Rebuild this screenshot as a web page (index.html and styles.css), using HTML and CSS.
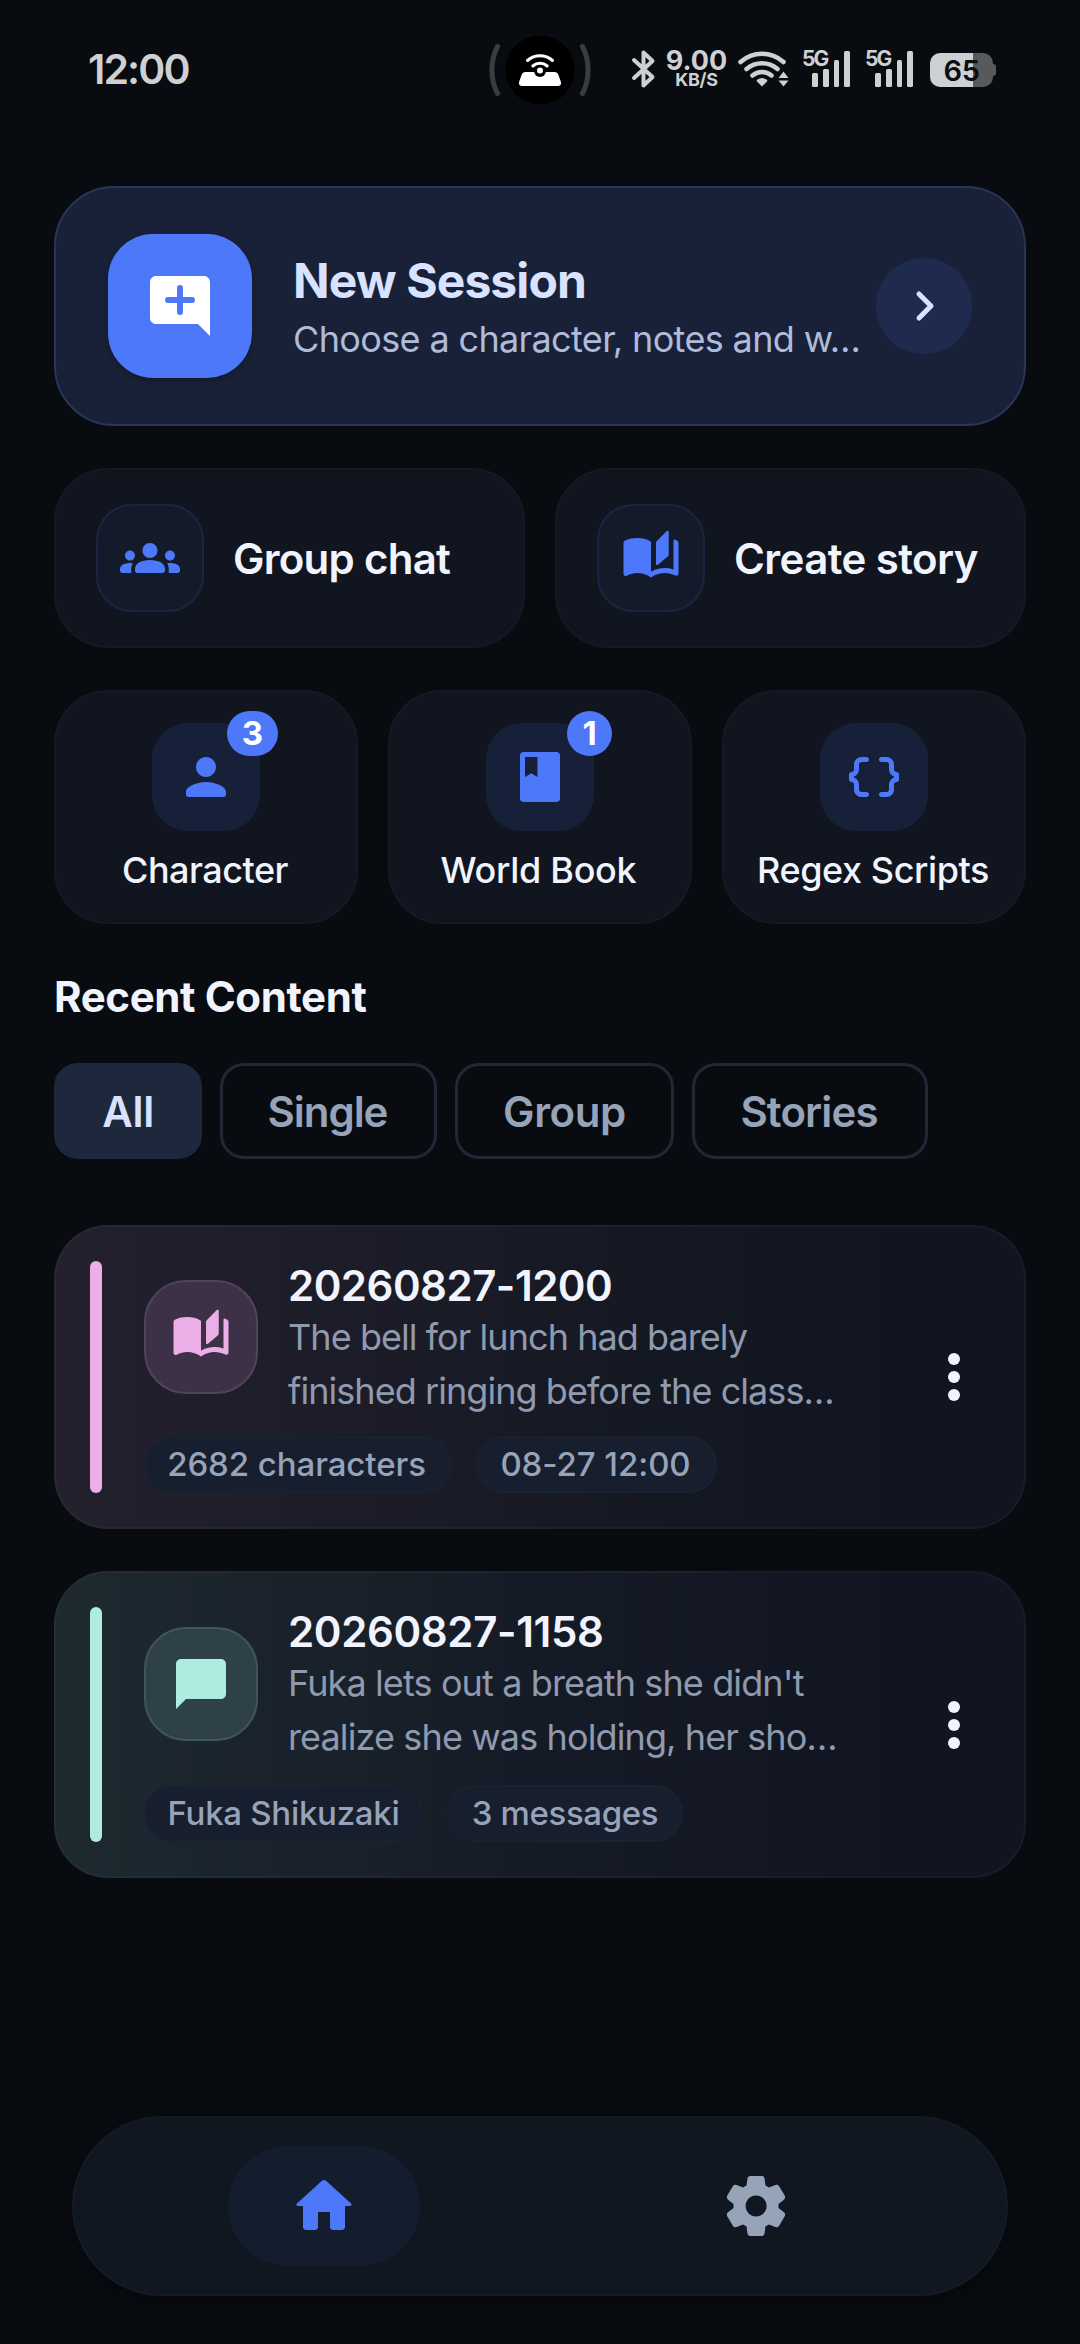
FILE: index.html
```html
<!DOCTYPE html>
<html lang="en">
<head>
<meta charset="utf-8">
<title>Home</title>
<link rel="stylesheet" href="styles.css">
</head>
<body>
<svg class="defs" aria-hidden="true">
  <symbol id="stories" viewBox="0 0 24 24">
    <path d="M12 19.8c-1.6-1.2-3.5-1.8-5.5-1.8-1.45 0-2.85.35-4.2 1.05-.6.3-1.3-.1-1.3-.8V6c0-.4.2-.75.5-.95C3 4.3 4.75 4 6.5 4c2 0 3.9.4 5.5 1.5v12c1.6-1 3.5-1.5 5.5-1.5 1.2 0 2.35.2 3.5.55V5.2c0-.5.3-.7.7-.55.3.12.55.25.8.4.3.2.5.5.5.95v12.2c0 .7-.7 1.1-1.3.8-1.35-.7-2.75-1.05-4.2-1.05-2 0-3.9.6-5.5 1.85z"/>
    <path d="M14 6c0-.25.1-.5.3-.7l4-4.1c.3-.3.8-.1.8.35v9.05c0 .3-.1.5-.3.7l-4 3.4c-.3.25-.8.05-.8-.35z"/>
  </symbol>
</svg>

<header class="status">
  <div class="time">12:00</div>
  <svg class="cutout" viewBox="0 0 110 70" fill="none" stroke-linecap="round">
    <circle cx="55" cy="35" r="34.500" fill="#000"/>
    <path d="M12.500 11.500a52 52 0 0 0 0 47M97.500 11.500a52 52 0 0 1 0 47" stroke="#3b3c3e" stroke-width="5"/>
    <path d="M40 37h30q2.500 0 3.300 2.500l2.500 7q1.200 4.500-3.300 4.500H37.500q-4.500 0-3.300-4.500l2.500-7q.8-2.500 3.300-2.500z" fill="#fff"/>
    <circle cx="55" cy="36" r="6" fill="#000"/>
    <circle cx="55" cy="35.500" r="3" fill="#fff"/>
    <path d="M42.500 25.500a19 19 0 0 1 25 0M47.800 31a11 11 0 0 1 14.400 0" stroke="#fff" stroke-width="3"/>
  </svg>
  <div class="indicators">
    <svg class="bt" viewBox="0 0 26 40" fill="none" stroke="#cfd0d2" stroke-width="4" stroke-linejoin="round" stroke-linecap="round"><path d="M4 11l18.500 17-9 8.500v-33l9 8.500L4 29"/></svg>
    <div class="speed"><span class="rate">9.00</span><span class="unit">KB/S</span></div>
    <svg class="wifi" viewBox="0 0 54 38" fill="none" stroke="#cfd0d2" stroke-width="4.500" stroke-linecap="round"><path d="M4.500 12a32 32 0 0 1 43 0M10.500 19a24 24 0 0 1 31 0M16.500 25.500a15 15 0 0 1 19 0"/><path d="M26 36.500l-5-5q-.8-1.200.5-2a8 8 0 0 1 9 0q1.300.8.5 2zM47.500 21.500l5 6.500h-10zM42.500 30.500h10l-5 6z" fill="#cfd0d2" stroke="none"/></svg>
    <div class="sig first"><span>5G</span><i class="s1"></i><i class="s2"></i><i class="s3"></i><i class="s4"></i></div>
    <div class="sig"><span>5G</span><i class="s1"></i><i class="s2"></i><i class="s3"></i><i class="s4"></i></div>
    <div class="battery">65</div>
  </div>
</header>

<main>
  <section class="hero">
    <div class="hero-icon"><svg viewBox="0 0 24 24" width="72" height="72"><path fill="#fff" d="M22 4c0-1.100-.9-2-2-2H4c-1.100 0-2 .9-2 2v12c0 1.100.9 2 2 2h14l4 4V4z"/><path d="M12 6v8M8 10h8" stroke="#4d78f9" stroke-width="2" stroke-linecap="round"/></svg></div>
    <div class="hero-text">
      <h1>New Session</h1>
      <p>Choose a character, notes and w…</p>
    </div>
    <div class="go"><svg viewBox="0 0 24 24" width="60" height="60"><path d="M10 7.200l4.800 4.800-4.800 4.800" fill="none" stroke="#d9e2ff" stroke-width="2" stroke-linecap="round" stroke-linejoin="round"/></svg></div>
  </section>

  <section class="row two">
    <div class="card wide"><div class="tile outlined"><svg viewBox="0 0 24 24"><path d="M12 12.750c1.630 0 3.070.39 4.240.9 1.080.48 1.760 1.560 1.760 2.730V17c0 .55-.45 1-1 1H7c-.55 0-1-.45-1-1v-.61c0-1.180.68-2.260 1.760-2.730 1.170-.52 2.610-.91 4.240-.91zM4 13c1.100 0 2-.9 2-2s-.9-2-2-2-2 .9-2 2 .9 2 2 2zm1.130 1.100c-.37-.06-.74-.1-1.130-.1-.99 0-1.930.21-2.780.58C.48 14.900 0 15.620 0 16.430V17c0 .55.45 1 1 1h3.500v-1.610c0-.83.23-1.610.63-2.290zM20 13c1.100 0 2-.9 2-2s-.9-2-2-2-2 .9-2 2 .9 2 2 2zm4 3.430c0-.81-.48-1.530-1.220-1.850-.85-.37-1.790-.58-2.780-.58-.39 0-.76.04-1.130.1.4.68.63 1.460.63 2.290V18H23c.55 0 1-.45 1-1v-.57zM12 6c1.660 0 3 1.340 3 3s-1.340 3-3 3-3-1.340-3-3 1.340-3 3-3z"/></svg></div><h2>Group chat</h2></div>
    <div class="card wide"><div class="tile outlined"><svg><use href="#stories"/></svg></div><h2 class="story">Create story</h2></div>
  </section>

  <section class="row three">
    <div class="card small"><div class="tile"><svg viewBox="0 0 24 24"><path d="M12 12c2.210 0 4-1.790 4-4s-1.790-4-4-4-4 1.790-4 4 1.790 4 4 4zm0 2c-2.670 0-8 1.340-8 4v1c0 .55.45 1 1 1h14c.55 0 1-.45 1-1v-1c0-2.660-5.330-4-8-4z"/></svg><span class="badge b3">3</span></div><h3>Character</h3></div>
    <div class="card small"><div class="tile"><svg viewBox="0 0 24 24"><path d="M18.600 2H5.400C4.600 2 4 2.600 4 3.400v17.200c0 .8.6 1.400 1.400 1.400h13.200c.8 0 1.400-.6 1.400-1.400V3.400c0-.8-.6-1.400-1.400-1.400zM6 4h5v8l-2.500-1.500L6 12V4z"/></svg><span class="badge">1</span></div><h3 class="world">World Book</h3></div>
    <div class="card small"><div class="tile"><svg viewBox="0 0 24 24"><path d="M4 7v2c0 .55-.45 1-1 1s-1 .45-1 1v2c0 .55.45 1 1 1s1 .45 1 1v2c0 1.650 1.350 3 3 3h2c.55 0 1-.45 1-1s-.45-1-1-1H7c-.55 0-1-.45-1-1v-2c0-1.300-.84-2.420-2-2.830v-.34C5.160 11.420 6 10.300 6 9V7c0-.55.45-1 1-1h2c.55 0 1-.45 1-1s-.45-1-1-1H7C5.350 4 4 5.350 4 7zM20 7v2c0 .55.45 1 1 1s1 .45 1 1v2c0 .55-.45 1-1 1s-1 .45-1 1v2c0 1.650-1.350 3-3 3h-2c-.55 0-1-.45-1-1s.45-1 1-1h2c.55 0 1-.45 1-1v-2c0-1.300.84-2.420 2-2.830v-.34c-1.160-.41-2-1.530-2-2.830V7c0-.55-.45-1-1-1h-2c-.55 0-1-.45-1-1s.45-1 1-1h2c1.650 0 3 1.350 3 3z"/></svg></div><h3 class="regex">Regex Scripts</h3></div>
  </section>

  <h2 class="section-title">Recent Content</h2>
  <nav class="chips">
    <div class="chip active c1">All</div>
    <div class="chip c2">Single</div>
    <div class="chip c3">Group</div>
    <div class="chip c4">Stories</div>
  </nav>

  <article class="item pink">
    <div class="bar"></div>
    <div class="body">
      <div class="head">
        <div class="avatar"><svg><use href="#stories"/></svg></div>
        <div class="text"><h4>20260827-1200</h4><p>The bell for lunch had barely<br>finished ringing before the class…</p></div>
      </div>
      <div class="tags"><div class="tag t1">2682 characters</div><div class="tag t2">08-27 12:00</div></div>
    </div>
    <div class="menu"><i></i><i></i><i></i></div>
  </article>

  <article class="item mint">
    <div class="bar"></div>
    <div class="body">
      <div class="head">
        <div class="avatar"><svg viewBox="0 0 24 24"><path d="M20 2H4c-1.100 0-2 .9-2 2v18l4-4h14c1.100 0 2-.9 2-2V4c0-1.100-.9-2-2-2z"/></svg></div>
        <div class="text"><h4>20260827-1158</h4><p>Fuka lets out a breath she didn't<br>realize she was holding, her sho…</p></div>
      </div>
      <div class="tags"><div class="tag t3">Fuka Shikuzaki</div><div class="tag t4">3 messages</div></div>
    </div>
    <div class="menu"><i></i><i></i><i></i></div>
  </article>
</main>

<footer class="dock">
  <div class="tab"><div class="pill"><svg viewBox="0 0 24 24" width="72" height="72" fill="#4d78f9"><path d="M10 19v-5h4v5c0 .55.45 1 1 1h3c.55 0 1-.45 1-1v-7h1.700c.46 0 .68-.57.33-.87L12.670 3.600c-.38-.34-.96-.34-1.340 0l-8.360 7.530c-.34.3-.13.87.33.87H5v7c0 .55.45 1 1 1h3c.55 0 1-.45 1-1z"/></svg></div></div>
  <div class="tab"><svg viewBox="0 0 24 24" width="72" height="72" fill="#96a3b9"><path d="M19.500 12c0-.23-.01-.45-.03-.68l1.860-1.410c.4-.3.51-.86.26-1.300l-1.870-3.230c-.25-.44-.79-.62-1.250-.42l-2.150.91c-.37-.26-.76-.49-1.170-.68l-.29-2.310C14.800 2.380 14.370 2 13.870 2h-3.730c-.51 0-.94.38-1 .88l-.29 2.310c-.41.19-.8.42-1.170.68l-2.150-.91c-.46-.2-1-.02-1.250.42L2.410 8.620c-.25.44-.14.99.26 1.300l1.860 1.410C4.510 11.550 4.500 11.770 4.500 12s.01.45.03.68l-1.860 1.410c-.4.3-.51.86-.26 1.300l1.870 3.230c.25.44.79.62 1.250.42l2.150-.91c.37.26.76.49 1.170.68l.29 2.310c.06.5.49.88.99.88h3.730c.5 0 .93-.38.99-.88l.29-2.310c.41-.19.8-.42 1.170-.68l2.150.91c.46.2 1 .02 1.250-.42l1.870-3.230c.25-.44.14-.99-.26-1.300l-1.860-1.410c.03-.23.04-.45.04-.68zm-7.460 3.500c-1.930 0-3.500-1.570-3.500-3.500s1.570-3.500 3.500-3.500 3.500 1.570 3.500 3.500-1.570 3.500-3.500 3.500z"/></svg></div>
</footer>
</body>
</html>
```
FILE: styles.css
```css
* { box-sizing: border-box; }
body {
  margin: 0;
  width: 1080px;
  height: 2344px;
  overflow: hidden;
  background: #080b10;
  color: #f1f4fd;
  font-family: Inter, "Noto Sans", sans-serif;
  display: flex;
  flex-direction: column;
}
h1, h2, h3, h4, p { margin: 0; white-space: nowrap; }
svg { display: block; flex: none; }
.defs { position: absolute; width: 0; height: 0; }

/* status bar */
.status { height: 140px; display: flex; align-items: center; color: #cfd0d2; flex: none; }
.time { width: 485px; padding-left: 88px; font-size: 41px; line-height: 50px; font-weight: 600; letter-spacing: -1.9px; margin-top: -3px; }
.cutout { width: 110px; height: 70px; }
.indicators { display: flex; align-items: center; margin-left: 35px; height: 40px; margin-top: -2px; }
.bt { width: 26px; height: 40px; }
.speed { width: 63px; margin-left: 9px; height: 38px; display: flex; flex-direction: column; align-items: center; }
.rate { font-size: 27px; line-height: 22px; font-weight: 700; }
.unit { font-size: 18px; line-height: 16px; font-weight: 700; letter-spacing: -.28px; }
.wifi { width: 54px; height: 38px; margin-left: 8px; }
.sig {
  width: 49px; height: 38px; margin-left: 14px; padding-bottom: 1px;
  display: grid; grid-template-columns: 10px 11px 10.500px 10.500px 6px; align-items: end; position: relative;
}
.sig.first { margin-left: 12px; }
.sig span { position: absolute; left: 0; top: -2px; font-size: 21px; line-height: 21px; font-weight: 700; letter-spacing: -2px; }
.sig i { width: 5.500px; border-radius: 1.500px; background: #cfd0d2; }
.s1 { height: 14px; grid-column: 2; }
.s2 { height: 18px; }
.s3 { height: 27px; }
.s4 { height: 36px; }
.battery {
  width: 63px; height: 34px; margin: 2px 0 0 16px;
  border-radius: 10px;
  background: linear-gradient(90deg, #cfd0d2 43px, #58595c 43px);
  color: #0a0d12; font-size: 29px; font-weight: 600; line-height: 36px; text-align: center;
  position: relative; letter-spacing: -.4px;
}
.battery::after { content: ""; position: absolute; left: 63px; top: 11px; width: 3px; height: 12px; border-radius: 0 3px 3px 0; background: #58595c; }

main { width: 972px; margin: 46px auto 0; display: flex; flex-direction: column; }

/* primary action */
.hero {
  height: 240px; padding: 0 52px; display: flex; align-items: center;
  background: #182138; border: 2px solid #293557; border-radius: 60px;
}
.hero-icon {
  width: 144px; height: 144px; border-radius: 45px; background: #4d78f9;
  display: grid; place-items: center; box-shadow: 0 3px 6px rgba(0, 0, 0, .25);
}
.hero-text { margin-left: 41px; width: 583px; padding-top: 6px; }
.hero-text h1 { font-size: 48px; line-height: 60px; font-weight: 700; letter-spacing: -.89px; color: #d9e2ff; }
.hero-text p { font-size: 36px; line-height: 56px; letter-spacing: -.64px; color: #b0bbd9; }
.go { width: 96px; height: 96px; border-radius: 50%; background: #1e2a4e; display: grid; place-items: center; }

/* shortcut cards */
.row { display: grid; gap: 30px; }
.two { grid-template-columns: 1fr 1fr; margin-top: 42px; }
.three { grid-template-columns: repeat(3, 1fr); margin-top: 42px; }
.card { background: #101520; border: 2px solid #141a24; border-radius: 54px; display: flex; align-items: center; }
.wide { height: 180px; padding-left: 40px; }
.wide h2 { font-size: 42px; line-height: 60px; font-weight: 600; letter-spacing: -.73px; margin: 1px 0 0 29px; }
.wide .story { letter-spacing: -.6px; }
.tile { width: 108px; height: 108px; border-radius: 36px; background: #172039; display: grid; place-items: center; position: relative; }
.tile svg, .avatar svg { width: 60px; height: 60px; fill: #4d78f9; }
.outlined { background: #131b2a; border: 2px solid #1b2542; }
.small { height: 234px; flex-direction: column; padding-top: 31px; }
.small h3 { font-size: 36px; line-height: 50px; font-weight: 500; letter-spacing: -.5px; margin: 14px 2px 0 0; }
.small .world { letter-spacing: -.29px; margin-right: 3px; }
.small .regex { letter-spacing: -.42px; }
.badge {
  position: absolute; right: -18px; top: -12px; width: 45px; height: 45px; border-radius: 23px;
  background: #4d78f9; color: #fff; font: 700 33px/45px Inter, sans-serif; text-align: center;
}
.b3 { width: 51px; }

/* filters */
.section-title { font-size: 42px; line-height: 50px; font-weight: 700; letter-spacing: -.38px; margin-top: 48px; }
.chips { display: flex; gap: 18px; margin-top: 41px; }
.chip {
  height: 96px; border: 3px solid #202838; border-radius: 24px; color: #96a3b9;
  font-size: 42px; line-height: 91px; font-weight: 600; text-align: center;
}
.active { background: #1d283c; border-color: #1d283c; color: #d9e2ff; }
.c1 { width: 148px; letter-spacing: -.27px; }
.c2 { width: 217px; letter-spacing: -1.050px; padding-right: 2px; }
.c3 { width: 219px; letter-spacing: -.37px; }
.c4 { width: 236px; letter-spacing: -.87px; padding-right: 2px; }

/* recent items */
.item { border-radius: 54px; padding: 34px; display: flex; align-items: stretch; border: 2px solid rgba(255, 255, 255, .03); background-origin: border-box; }
.pink { height: 304px; margin-top: 66px; background-image: linear-gradient(90deg, #24202e, #171a25 50%, #101520 85%); }
.mint { height: 307px; margin-top: 42px; background-image: linear-gradient(90deg, #1e2930, #151b26 50%, #111521 85%); }
.bar { width: 12px; border-radius: 6px; }
.pink .bar { background: #ebaee6; }
.mint .bar { background: #aeece0; }
.body { margin-left: 42px; flex: 1; display: flex; flex-direction: column; justify-content: space-between; }
.head { display: flex; align-items: flex-start; }
.avatar { width: 114px; height: 114px; border-radius: 42px; margin-top: 19px; display: grid; place-items: center; border: 2px solid; flex: none; }
.pink .avatar { background: #3d3147; border-color: #51435a; }
.pink svg { fill: #ebaee6; }
.mint .avatar { background: #2f4148; border-color: #40565b; margin-top: 20px; }
.mint svg { fill: #aeece0; }
.text { margin: 1px 0 0 30px; }
.text h4 { font-size: 42px; line-height: 48px; font-weight: 600; letter-spacing: -.5px; }
.text p { font-size: 36px; line-height: 54px; letter-spacing: -.94px; color: #8f9aaf; }
.mint .text h4 { letter-spacing: -.36px; }
.mint .text p { letter-spacing: -.88px; }
.tags { display: flex; gap: 24px; }
.tag {
  height: 57px; border-radius: 29px; background: #171e2d; border: 2px solid #1a2130; color: #96a3b9;
  font-size: 33px; line-height: 53px; font-weight: 500; text-align: center; white-space: nowrap;
}
.t1 { width: 308px; letter-spacing: -.08px; padding-right: 3px; }
.t2 { width: 241px; letter-spacing: -.07px; padding-right: 2px; }
.t3 { width: 279px; letter-spacing: -.28px; }
.t4 { width: 236px; letter-spacing: -.37px; }
.menu { width: 72px; display: flex; flex-direction: column; align-items: center; justify-content: center; gap: 6px; }
.menu i { width: 12px; height: 12px; border-radius: 50%; background: #f1f4fd; }

/* bottom dock */
.dock {
  margin: auto 72px 48px; height: 180px; padding: 0 34px; border-radius: 90px;
  background: #101720; border: 2px solid #151b24; display: flex; flex: none;
  box-shadow: 0 6px 24px rgba(0, 0, 0, .35);
}
.tab { flex: 1; display: grid; place-items: center; }
.pill { width: 192px; height: 120px; border-radius: 60px; background: #131d2e; display: grid; place-items: center; }
```
